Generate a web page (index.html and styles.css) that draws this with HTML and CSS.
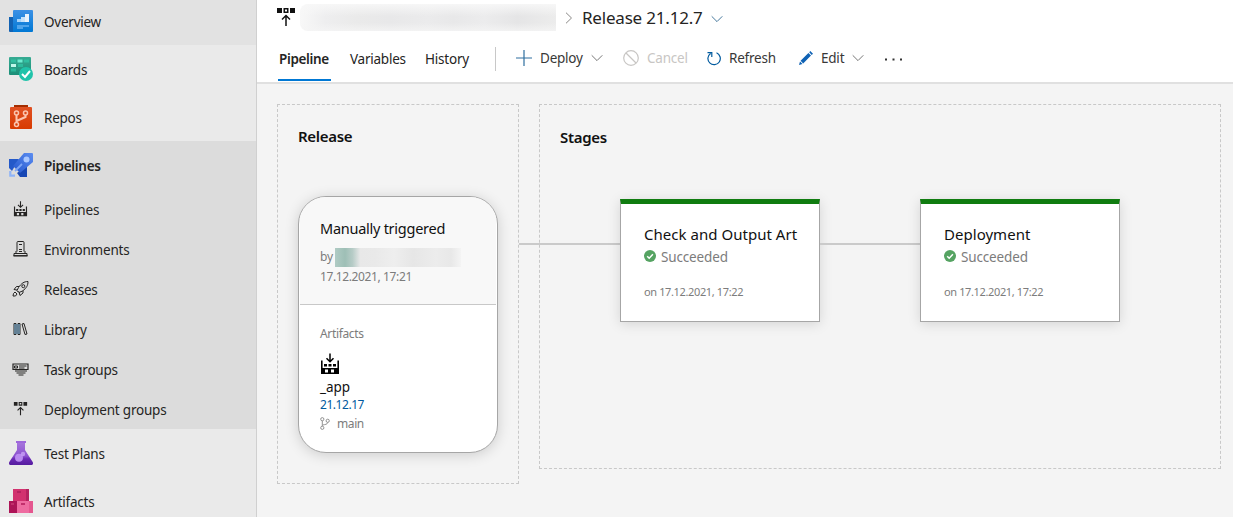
FILE: index.html
```html
<!DOCTYPE html>
<html lang="en">
<head>
<meta charset="utf-8">
<title>Release 21.12.7</title>
<link rel="stylesheet" href="styles.css">
</head>
<body>
<svg class="defs" aria-hidden="true">
  <defs>
    <linearGradient id="gBlue" x1="0" y1="0" x2="0" y2="1"><stop offset="0" stop-color="#3c91e5"/><stop offset="1" stop-color="#0078d4"/></linearGradient>
    <linearGradient id="gGreen" x1="0" y1="0" x2="0" y2="1"><stop offset="0" stop-color="#37ab93"/><stop offset="1" stop-color="#1b8f78"/></linearGradient>
    <linearGradient id="gRed" x1="0" y1="0" x2="0" y2="1"><stop offset="0" stop-color="#e05123"/><stop offset="1" stop-color="#d83b01"/></linearGradient>
    <linearGradient id="gPurple" x1="0" y1="0" x2="0" y2="1"><stop offset="0" stop-color="#a675dc"/><stop offset=".6" stop-color="#8b51cf"/><stop offset=".72" stop-color="#6b2ab5"/><stop offset="1" stop-color="#551c9f"/></linearGradient>
    <linearGradient id="gRocket" x1="0" y1="1" x2="1" y2="0"><stop offset="0" stop-color="#2457cd"/><stop offset="1" stop-color="#5c8df0"/></linearGradient>
    <symbol id="factory" viewBox="0 0 20 22">
      <path d="M1.800 7.500V20.500M18.200 7.500V20.500" stroke="currentColor" stroke-width="1.600"/>
      <path fill="currentColor" fill-rule="evenodd" d="M1 15h18v6H1zM5 16.500v3h3v-3zM11 16.500v3h3v-3z"/>
      <path fill="currentColor" d="M4 11h3v2.600H4zM8.500 11h3v2.600h-3zM13 11h3v2.600h-3z"/>
      <path d="M10 .5V8.500M6.500 5.200 10 8.700l3.500-3.500" fill="none" stroke="currentColor" stroke-width="1.500"/>
    </symbol>
    <symbol id="deploy" viewBox="0 0 18 19">
      <path fill="currentColor" fill-rule="evenodd" d="M0 0h5v5H0zM6.500 0h5v5h-5zM8 1.500v2h2v-2zM13 0h5v5h-5z"/>
      <path d="M9 18V8M5 11.500 9 7.500l4 4" fill="none" stroke="currentColor" stroke-width="1.500"/>
    </symbol>
    <symbol id="chevron" viewBox="0 0 12 8"><path d="M.7 1.300 6 6.600l5.300-5.300" fill="none" stroke="currentColor" stroke-width="1"/></symbol>
    <symbol id="check" viewBox="0 0 12 12"><circle cx="6" cy="6" r="6" fill="#55a362"/><path d="M3.200 6.200l2 2 3.700-3.900" fill="none" stroke="#fff" stroke-width="1.500"/></symbol>
  </defs>
</svg>
<div class="app">
  <nav class="sidebar">
    <a class="item overview">
      <svg class="hub" viewBox="0 0 24 24"><path fill="#1262b3" d="M0 8h5v15H1a1 1 0 0 1-1-1z"/><path fill="url(#gBlue)" d="M5 1h18a1 1 0 0 1 1 1v20a1 1 0 0 1-1 1H4V2a1 1 0 0 1 1-1z"/><path fill="#a5d3fa" d="M8 10h4v3H8z"/><path fill="#c5e3fb" d="M12 8h4v5h-4z"/><path fill="#fff" d="M16 5h4v8h-4z" opacity=".9"/><path fill="#50a5eb" d="M8 16h12v2h-6v2H8z"/></svg>
      <span>Overview</span></a>
    <a class="item">
      <svg class="hub" viewBox="0 0 24 24"><rect y="0" width="22" height="18" rx="1" fill="url(#gGreen)"/><path fill="#32d4b0" d="M2 2.500h5v3H2zM2 11.500h5v3H2zM15 2.500h5v3h-5zM9 7h5v3H9z" opacity=".55"/><path fill="#6debd0" d="M8.500 2.500h5v3h-5z"/><path fill="#bff7e9" d="M2 7h5v3H2z"/><circle cx="17" cy="17" r="7" fill="#20c3aa"/><path d="M13 17l3 3 5-6" fill="none" stroke="#fff" stroke-width="2"/></svg>
      <span>Boards</span></a>
    <a class="item">
      <svg class="hub" viewBox="0 0 24 24"><path fill="#a42d00" d="M5 0h14v2h2v3H3V2h2z"/><rect x="1" y="2" width="22" height="22" rx="1" fill="url(#gRed)"/><g fill="none" stroke="#fbc5b0" stroke-width="1.500"><circle cx="7.500" cy="8" r="2"/><circle cx="16.500" cy="8" r="2"/><circle cx="7.500" cy="19.500" r="2"/><path d="M7.500 10v7.500M16.500 10v2l-9 4" stroke-width="2"/></g></svg>
      <span>Repos</span></a>
    <div class="group">
      <a class="item active">
        <svg class="hub" viewBox="0 0 24 24"><path fill="#2459c9" d="M0 6h10l-7 12-3-3z"/><path fill="#1747b4" d="M18 13v11h-7l-3-4z"/><path fill="url(#gRocket)" d="M15 0h8a1 1 0 0 1 1 1v8L11 20 4 13z"/><circle cx="17.500" cy="6.500" r="3" fill="#a9c7ff"/><path d="M13 11 6 18" stroke="#7ea6f4" stroke-width="1.800"/><path d="M1.300 18v4.700H6" fill="none" stroke="#8fb4f7" stroke-width="2.200"/></svg>
        <span>Pipelines</span></a>
      <a class="item sub"><svg class="glyph"><use href="#factory"/></svg><span>Pipelines</span></a>
      <a class="item sub"><svg class="glyph" viewBox="0 0 16 16" fill="none" stroke="currentColor"><path d="M4.500 10.500v-9a1 1 0 0 1 1-1h5a1 1 0 0 1 1 1v9M6.500 3.500h3M6.500 8.500h3M6.500 10.500h3M3.500 10v2.500h9V10M1.500 12.500h13M1.500 12.500V15M14.500 12.500V15"/><path d="M1 14.800h14" stroke-width="1.500"/></svg><span>Environments</span></a>
      <a class="item sub"><svg class="glyph" viewBox="0 0 16 16" fill="none" stroke="currentColor"><path d="M15.500.5c-4 0-6.500 1.800-9.500 6L4.500 9.500l2 2 3.500-1.500c4-3 5.500-5.500 5.500-9.500zM6.500 5.500H4L1.500 8.500l3 .5M10.500 9.500V12l-3 2.500-.8-3M5 10l1.500 1.500M1 12.500l1.500-1.500 2 2L3 15H.5z"/><circle cx="10.800" cy="5.200" r="1.500"/></svg><span>Releases</span></a>
      <a class="item sub"><svg class="glyph" viewBox="0 0 16 16" fill="none" stroke="currentColor"><path d="M1.500 2.500h2v11h-2zM5.500 2.500h2v11h-2zM9.500 3l2-.5 3 10.500-2 .5z"/><path d="M2.500 3v10M4.500 3v10M6.500 3v10" stroke="#3b83b8" stroke-width=".8"/></svg><span>Library</span></a>
      <a class="item sub"><svg class="glyph" viewBox="0 0 16 16" fill="none" stroke="currentColor"><path d="M.5 3h15v5.500H.5zM6.500 5H14M6.500 7H12M2.500 10h12M4 12h9M6 14h5" stroke-width="1.200"/><path d="M2 5h3v2H2z"/></svg><span>Task groups</span></a>
      <a class="item sub"><svg class="glyph deploy"><use href="#deploy"/></svg><span>Deployment groups</span></a>
    </div>
    <a class="item">
      <svg class="hub" viewBox="0 0 24 24"><path fill="url(#gPurple)" d="M8 2h8v7l7.700 12c.8 1.500 0 3-1.700 3H2c-1.700 0-2.500-1.500-1.700-3L8 9z"/><path fill="#9f68dc" d="M7 0h10v2H7z"/><circle cx="10" cy="16.800" r="4" fill="#b98af0"/><circle cx="14" cy="13" r="2.200" fill="#c9a2f6" opacity=".8"/></svg>
      <span>Test Plans</span></a>
    <a class="item">
      <svg class="hub" viewBox="0 0 24 24"><path fill="#d2326f" d="M4 0h16v12H4z"/><path fill="#b52360" d="M17 0h3v12h-3zM8 2h4v2H8z"/><path fill="#ad1457" d="M0 12h8v12H0z"/><path fill="#ee6ba0" d="M8 12h16v12H8z"/><path fill="#e5568f" d="M20 12h4v12h-4z"/><path fill="#c22f6c" d="M12 14h4v2h-4zM2 14h3v2H2z"/></svg>
      <span>Artifacts</span></a>
  </nav>
  <main class="main">
    <header class="header">
      <div class="crumbs">
        <svg class="crumb-icon"><use href="#deploy"/></svg>
        <span class="redacted"></span>
        <svg class="sep" viewBox="0 0 8 12"><path d="M1 .7 6.500 6 1 11.300" fill="none" stroke="currentColor"/></svg>
        <span class="title">Release 21.12.7</span>
        <svg class="chev blue"><use href="#chevron"/></svg>
      </div>
      <div class="toolbar">
        <a class="tab selected">Pipeline</a>
        <a class="tab variables">Variables</a>
        <a class="tab history">History</a>
        <i class="divider"></i>
        <button class="cmd deploy-cmd"><svg class="plus" viewBox="0 0 16 16"><path d="M8 0v16M0 8h16" stroke="#2f6f9f" stroke-width="1.200"/></svg><span>Deploy</span><svg class="chev"><use href="#chevron"/></svg></button>
        <button class="cmd cancel-cmd" disabled><svg class="ban" viewBox="0 0 16 16" fill="none" stroke="currentColor" stroke-width="1.200"><circle cx="8" cy="8" r="7.300"/><path d="M3 3l10 10"/></svg><span>Cancel</span></button>
        <button class="cmd refresh-cmd"><svg class="refresh" viewBox="0 0 14 15" fill="none" stroke="#005a9e" stroke-width="1.200"><path d="M9.500 1.800A6.200 6.200 0 1 1 3.600 2.400M.5 1.600h4.300V6"/></svg><span>Refresh</span></button>
        <button class="cmd edit-cmd"><svg class="pencil" viewBox="0 0 14 14" fill="#0f62b4"><path d="M0 14l1-3.500 2.500 2.500zM1.600 9.800 9.400 2l2.600 2.600-7.800 7.800zM10.200 1.300 11.300 0 14 2.700l-1.300 1.200z"/></svg><span>Edit</span><svg class="chev"><use href="#chevron"/></svg></button>
        <svg class="more" viewBox="0 0 17 3"><path fill="#333" d="M0 .5h2v2H0zM7.500 .5h2v2h-2zM15 .5h2v2h-2z"/></svg>
      </div>
    </header>
    <div class="canvas">
      <section class="panel release">
        <h2>Release</h2>
        <div class="card">
          <div class="trigger">
            <div class="trigger-title">Manually triggered</div>
            <div class="by"><span>by</span><i class="user"></i></div>
            <div class="when">17.12.2021, 17:21</div>
          </div>
          <div class="artifacts">
            <div class="label">Artifacts</div>
            <svg class="build"><use href="#factory"/></svg>
            <div class="app-name">_app</div>
            <a class="version">21.12.17</a>
            <div class="branch"><svg viewBox="0 0 10 13" fill="none" stroke="#888" stroke-width=".9"><circle cx="2.300" cy="2.200" r="1.600"/><circle cx="2.300" cy="10.800" r="1.600"/><circle cx="7.700" cy="3.800" r="1.600"/><path d="M2.300 3.800v5.400M7.700 5.400c0 2-3 2.200-5 2.600"/></svg><span>main</span></div>
          </div>
        </div>
      </section>
      <section class="panel stages">
        <h2>Stages</h2>
        <div class="flow">
          <i class="line first"></i>
          <article class="stage">
            <div class="stage-name">Check and Output Art</div>
            <div class="status"><svg><use href="#check"/></svg><span>Succeeded</span></div>
            <div class="date">on 17.12.2021, 17:22</div>
          </article>
          <i class="line"></i>
          <article class="stage">
            <div class="stage-name">Deployment</div>
            <div class="status"><svg><use href="#check"/></svg><span>Succeeded</span></div>
            <div class="date">on 17.12.2021, 17:22</div>
          </article>
        </div>
      </section>
    </div>
  </main>
</div>
</body>
</html>
```
FILE: styles.css
```css
* { box-sizing: border-box; }
body { margin: 0; overflow: hidden; font: 13.5px/20px "Noto Sans", "Open Sans", sans-serif; color: #252423; }
svg { display: block; flex: none; }
.defs { position: absolute; width: 0; height: 0; }
.app { display: flex; width: 1233px; height: 517px; overflow: hidden; }

.sidebar { width: 257px; flex: none; background: #eaeaea; border-right: 1px solid #d0d0d0; }
.item { display: flex; align-items: center; height: 48px; padding-left: 9px; letter-spacing: -.24px; }
.item span { padding-top: 1px; }
.overview { height: 45px; padding-bottom: 3px; background: #e2e2e2; }
.hub { width: 24px; height: 24px; margin-right: 11px; }
.group { background: #dcdcdc; }
.active { font-weight: 600; letter-spacing: -.3px; }
.sub { height: 40px; padding-left: 12px; letter-spacing: -.2px; }
.sub span { padding-top: 2px; }
.glyph { width: 17px; height: 16px; margin-right: 15px; }
.glyph.deploy { height: 14px; margin-bottom: 1px; }

.main { flex: 1; min-width: 0; background: #f4f4f4; }
.header { height: 84px; background: #fff; border-bottom: 2px solid #e0e0e0; }
.crumbs { display: flex; align-items: center; height: 36px; padding-left: 20px; }
.crumb-icon { width: 18px; height: 19px; margin-bottom: 2px; color: #111; }
.redacted { width: 256px; height: 27px; margin: 4px 9px 0 5px; align-self: flex-start; border-radius: 8px 0 0 8px;
  background: linear-gradient(180deg, rgba(248,248,248,.9), rgba(248,248,248,0) 45%, rgba(248,248,248,0) 70%, rgba(245,245,245,.8)),
    linear-gradient(90deg, #f8f8f8, #eeeeef 10%, #eaeaea 22%, #e8e8e9 35%, #ebebec 50%, #e8e8e9 60%, #ececed 72%, #e5e5e6 85%, #ececec); }
.sep { width: 8px; height: 12px; margin-right: 9px; color: #8a8886; }
.title { font-size: 17px; letter-spacing: -.2px; white-space: nowrap; }
.chev { width: 12px; height: 8px; color: #777; }
.chev.blue { margin: 2px 0 0 8px; color: #46789c; }
.toolbar { display: flex; align-items: center; height: 45px; padding-left: 21px; white-space: nowrap; }
.tab { height: 45px; line-height: 47px; letter-spacing: -.24px; }
.selected { width: 53px; padding-left: 1px; font-weight: 600; letter-spacing: -.35px; border-bottom: 2px solid #0078d4; }
.variables { width: 75px; margin-left: 19px; }
.history { width: 70px; letter-spacing: -.2px; }
.divider { width: 1px; height: 24px; background: #c8c8c8; }
.cmd { display: flex; align-items: center; border: 0; padding: 0; margin-bottom: 1px; background: none; font: inherit; letter-spacing: -.22px; color: #383838; }
.deploy-cmd { width: 108px; margin-left: 20px; }
.plus { width: 16px; height: 16px; margin-right: 8px; }
.cmd .chev { margin-left: 8px; }
.cancel-cmd { width: 84px; margin-left: -1px; color: #c8c6c4; }
.ban { width: 16px; height: 16px; margin-right: 8px; }
.refresh-cmd { width: 92px; }
.refresh { width: 14px; height: 15px; margin-right: 8px; }
.edit-cmd { width: 86px; }
.pencil { width: 14px; height: 14px; margin-right: 8px; }
.more { width: 17px; height: 3px; margin-top: 2px; }

.canvas { display: flex; align-items: flex-start; gap: 20px; padding: 20px 12px 0 20px; }
.panel { border: 1px dashed #c8c8c8; }
h2 { margin: 0; font-size: 15px; line-height: 20px; font-weight: 600; letter-spacing: -.3px; color: #111; }
.release { width: 242px; height: 380px; padding: 21px 20px 0; }
.card { width: 200px; height: 257px; margin-top: 50px; border: 1px solid #a6a6a6; border-radius: 28px; background: #fff; box-shadow: 0 2px 14px rgba(0,0,0,.16); overflow: hidden; }
.trigger { height: 108px; margin: 0 1px; padding: 21px 0 0 20px; background: #f8f8f8; border-bottom: 1px solid #c8c8c8; }
.trigger-title { font-size: 14.500px; letter-spacing: -.26px; color: #111; }
.by { display: flex; align-items: center; height: 19px; margin-top: 10px; font-size: 12px; color: #7c7c7c; }
.by span { margin-top: -1px; letter-spacing: -.2px; }
.user { width: 126px; height: 19px; margin-left: 2px; background: linear-gradient(90deg, #b0cbc4, #9ebfb6 8%, #b7ccc7 14%, #e8e8e8 20%, #e9e9e9 32%, #eeeeee 47%, #e6e6e6 62%, #ececec 80%, #e8e8e8 92%, #f4f4f4); }
.when { font-size: 12px; letter-spacing: -.38px; color: #7c7c7c; }
.artifacts { padding: 20px 0 0 21px; font-size: 12px; color: #7c7c7c; }
.label { line-height: 18px; letter-spacing: -.35px; }
.build { width: 20px; height: 22px; margin-top: 10px; color: #000; }
.app-name { margin-top: 2px; font-size: 13.500px; line-height: 20px; color: #111; }
.version { display: block; line-height: 16px; color: #005a9e; letter-spacing: -.45px; }
.branch { display: flex; align-items: center; height: 20px; margin-top: 1px; letter-spacing: -.4px; }
.branch svg { width: 10px; height: 13px; margin: 0 7px 2px 0; }

.stages { flex: 1; height: 365px; padding-top: 22px; }
.stages h2 { margin-left: 20px; }
.flow { display: flex; align-items: flex-start; margin-top: 52px; }
.line { width: 100px; height: 2px; margin-top: 44px; background: #cacaca; }
.line.first { width: 101px; margin-left: -21px; }
.stage { width: 200px; height: 123px; padding: 19px 0 0 23px; border: 1px solid #a6a6a6; border-top: 5px solid #107c10; background: #fff; box-shadow: 0 2px 12px rgba(0,0,0,.13); }
.stage-name { width: 154px; overflow: hidden; white-space: nowrap; font-size: 15px; line-height: 22px; letter-spacing: .03px; color: #111; }
.status { display: flex; align-items: center; gap: 5px; height: 22px; margin-top: 1px; font-size: 13.500px; letter-spacing: -.15px; color: #7c7c7c; }
.status svg { width: 12px; height: 12px; margin-bottom: 2px; }
.date { margin-top: 14px; font-size: 11px; line-height: 20px; letter-spacing: -.37px; color: #7c7c7c; }
```
